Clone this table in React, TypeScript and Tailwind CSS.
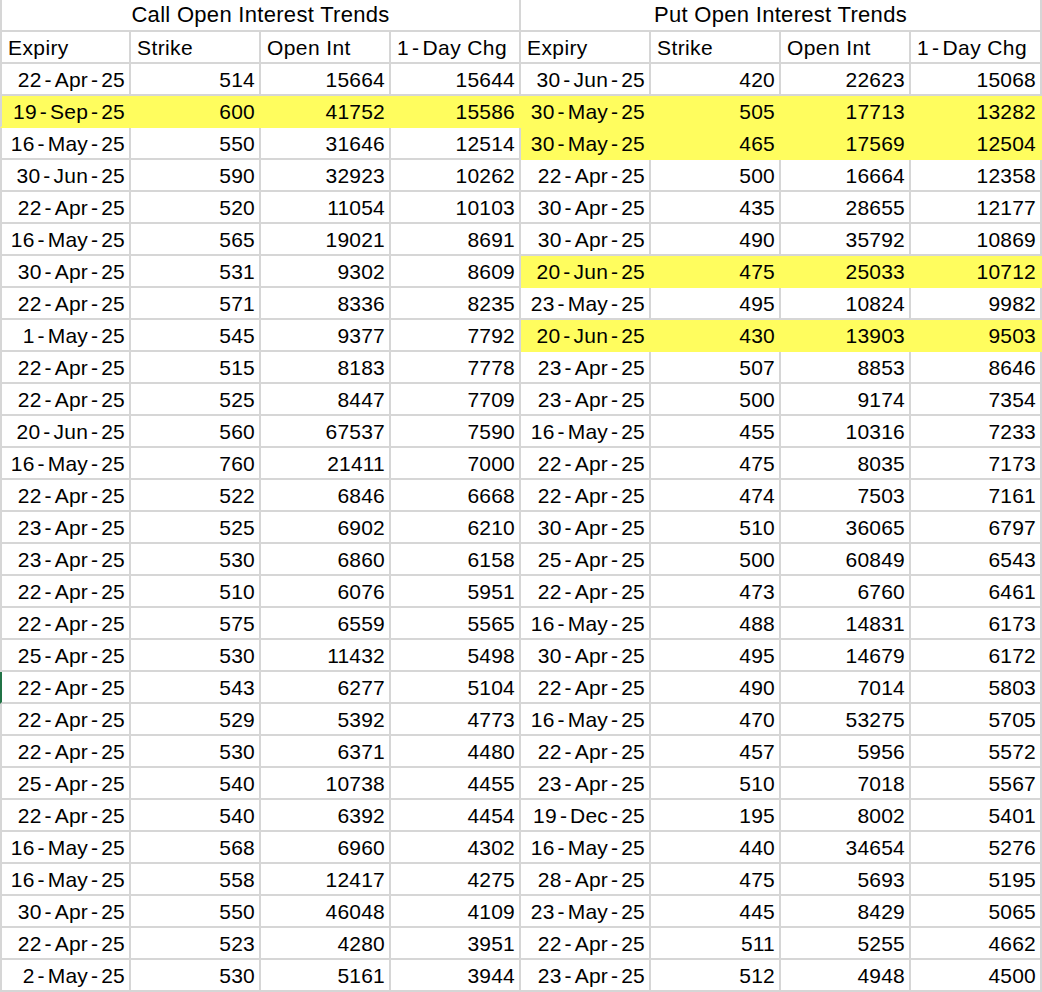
import React from 'react';

type Row = [string, number, number, number];

const CALLS: Row[] = [
  ['22-Apr-25', 514, 15664, 15644],
  ['19-Sep-25', 600, 41752, 15586],
  ['16-May-25', 550, 31646, 12514],
  ['30-Jun-25', 590, 32923, 10262],
  ['22-Apr-25', 520, 11054, 10103],
  ['16-May-25', 565, 19021, 8691],
  ['30-Apr-25', 531, 9302, 8609],
  ['22-Apr-25', 571, 8336, 8235],
  ['1-May-25', 545, 9377, 7792],
  ['22-Apr-25', 515, 8183, 7778],
  ['22-Apr-25', 525, 8447, 7709],
  ['20-Jun-25', 560, 67537, 7590],
  ['16-May-25', 760, 21411, 7000],
  ['22-Apr-25', 522, 6846, 6668],
  ['23-Apr-25', 525, 6902, 6210],
  ['23-Apr-25', 530, 6860, 6158],
  ['22-Apr-25', 510, 6076, 5951],
  ['22-Apr-25', 575, 6559, 5565],
  ['25-Apr-25', 530, 11432, 5498],
  ['22-Apr-25', 543, 6277, 5104],
  ['22-Apr-25', 529, 5392, 4773],
  ['22-Apr-25', 530, 6371, 4480],
  ['25-Apr-25', 540, 10738, 4455],
  ['22-Apr-25', 540, 6392, 4454],
  ['16-May-25', 568, 6960, 4302],
  ['16-May-25', 558, 12417, 4275],
  ['30-Apr-25', 550, 46048, 4109],
  ['22-Apr-25', 523, 4280, 3951],
  ['2-May-25', 530, 5161, 3944],
];

const PUTS: Row[] = [
  ['30-Jun-25', 420, 22623, 15068],
  ['30-May-25', 505, 17713, 13282],
  ['30-May-25', 465, 17569, 12504],
  ['22-Apr-25', 500, 16664, 12358],
  ['30-Apr-25', 435, 28655, 12177],
  ['30-Apr-25', 490, 35792, 10869],
  ['20-Jun-25', 475, 25033, 10712],
  ['23-May-25', 495, 10824, 9982],
  ['20-Jun-25', 430, 13903, 9503],
  ['23-Apr-25', 507, 8853, 8646],
  ['23-Apr-25', 500, 9174, 7354],
  ['16-May-25', 455, 10316, 7233],
  ['22-Apr-25', 475, 8035, 7173],
  ['22-Apr-25', 474, 7503, 7161],
  ['30-Apr-25', 510, 36065, 6797],
  ['25-Apr-25', 500, 60849, 6543],
  ['22-Apr-25', 473, 6760, 6461],
  ['16-May-25', 488, 14831, 6173],
  ['30-Apr-25', 495, 14679, 6172],
  ['22-Apr-25', 490, 7014, 5803],
  ['16-May-25', 470, 53275, 5705],
  ['22-Apr-25', 457, 5956, 5572],
  ['23-Apr-25', 510, 7018, 5567],
  ['19-Dec-25', 195, 8002, 5401],
  ['16-May-25', 440, 34654, 5276],
  ['28-Apr-25', 475, 5693, 5195],
  ['23-May-25', 445, 8429, 5065],
  ['22-Apr-25', 511, 5255, 4662],
  ['23-Apr-25', 512, 4948, 4500],
];

const CALL_HL = [1];
const PUT_HL = [1, 2, 6, 8];
const HEADERS = ['Expiry', 'Strike', 'Open Int', '1-Day Chg'];

// excel renders hyphens wide, pad them a bit
const Dashed = ({ text }: { text: string }) => {
  const parts = text.split('-');
  return (
    <>
      {parts.map((p, i) => (
        <React.Fragment key={i}>
          {i > 0 && <span className="mx-[3px]">-</span>}
          {p}
        </React.Fragment>
      ))}
    </>
  );
};

const Cell = ({
  children,
  hl,
  first,
  marker,
  left,
}: {
  children: React.ReactNode;
  hl?: boolean;
  first?: boolean;
  marker?: boolean;
  left?: boolean;
}) => (
  <div
    className={`h-8 flex items-center whitespace-nowrap overflow-hidden border-b-2 border-r-2 ${
      left ? 'justify-start pl-[6px] tracking-[0.4px]' : 'justify-end pr-[4px] tracking-[0.2px]'
    } ${hl ? 'bg-[#fffd5e] border-[#fffd5e]' : 'bg-white border-[#d6d6d6]'} ${
      first ? (marker ? 'border-l-2 border-l-[#217346]' : 'border-l-2 border-l-[#d6d6d6]') : ''
    }`}
  >
    {children}
  </div>
);

const App: React.FC = () => {
  return (
    <div
      className="w-[1042px] h-[992px] overflow-hidden bg-white text-[21px] leading-none text-black"
      style={{ fontFamily: '"Liberation Sans", Arial, sans-serif' }}
    >
      <div className="grid grid-cols-[131px_130px_130px_130px_130px_130px_130px_131px]">
        {/* title row */}
        <div className="col-span-4 h-8 flex items-center justify-center text-[22px] tracking-[0.3px] border-b-2 border-r-2 border-l-2 border-[#d6d6d6]">
          Call Open Interest Trends
        </div>
        <div className="col-span-4 h-8 flex items-center justify-center text-[22px] tracking-[0.3px] border-b-2 border-r-2 border-[#d6d6d6]">
          Put Open Interest Trends
        </div>

        {/* column headers */}
        {[...HEADERS, ...HEADERS].map((h, i) => (
          <Cell key={i} left first={i === 0}>
            <Dashed text={h} />
          </Cell>
        ))}

        {CALLS.map((c, r) => {
          const p = PUTS[r];
          const ch = CALL_HL.includes(r);
          const ph = PUT_HL.includes(r);
          return (
            <React.Fragment key={r}>
              <Cell hl={ch} first marker={r === 19}>
                <Dashed text={c[0]} />
              </Cell>
              <Cell hl={ch}>{c[1]}</Cell>
              <Cell hl={ch}>{c[2]}</Cell>
              <Cell hl={ch}>{c[3]}</Cell>
              <Cell hl={ph}>
                <Dashed text={p[0]} />
              </Cell>
              <Cell hl={ph}>{p[1]}</Cell>
              <Cell hl={ph}>{p[2]}</Cell>
              <Cell hl={ph}>{p[3]}</Cell>
            </React.Fragment>
          );
        })}
      </div>
    </div>
  );
};

export default App;
